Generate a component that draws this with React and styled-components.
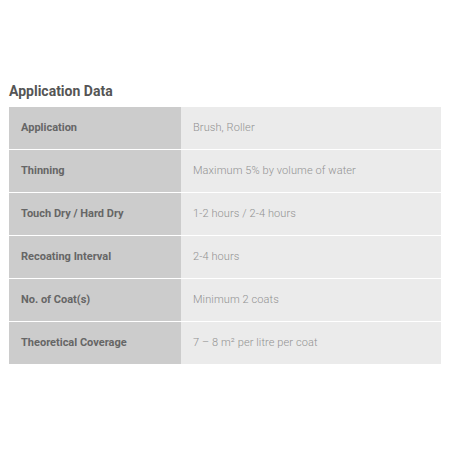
import React from "react";
import styled, { createGlobalStyle } from "styled-components";

const Global = createGlobalStyle`
  body {
    margin: 0;
    background: #ffffff;
    font-family: Roboto, "Liberation Sans", sans-serif;
  }
`;

const Page = styled.div`
  padding: 83px 15px 0 9px;
`;

const Title = styled.h3`
  margin: 0 0 7px;
  font-size: 14px;
  line-height: 17px;
  font-weight: 700;
  color: #555555;
`;

const Table = styled.div`
  display: grid;
  grid-template-columns: 172px 1fr;
  row-gap: 1px;
  background: #ffffff;
`;

const Label = styled.div`
  display: flex;
  align-items: center;
  box-sizing: border-box;
  height: 42px;
  padding: 0 0 2px 12px;
  background: #cccccc;
  color: #666666;
  font-size: 11px;
  font-weight: 700;
`;

const Value = styled.div`
  display: flex;
  align-items: center;
  box-sizing: border-box;
  height: 42px;
  padding: 0 0 2px 12px;
  background: #ebebeb;
  color: #929292;
  font-size: 11px;
  font-weight: 300;
  letter-spacing: 0.1px;
`;

const rows = [
  ["Application", "Brush, Roller"],
  ["Thinning", "Maximum 5% by volume of water"],
  ["Touch Dry / Hard Dry", "1-2 hours / 2-4 hours"],
  ["Recoating Interval", "2-4 hours"],
  ["No. of Coat(s)", "Minimum 2 coats"],
  ["Theoretical Coverage", "7 – 8 m² per litre per coat"],
];

export default function App() {
  return (
    <>
      <Global />
      <Page>
        <Title>Application Data</Title>
        <Table>
          {rows.map(([k, v]) => (
            <React.Fragment key={k}>
              <Label>{k}</Label>
              <Value>{v}</Value>
            </React.Fragment>
          ))}
        </Table>
      </Page>
    </>
  );
}
